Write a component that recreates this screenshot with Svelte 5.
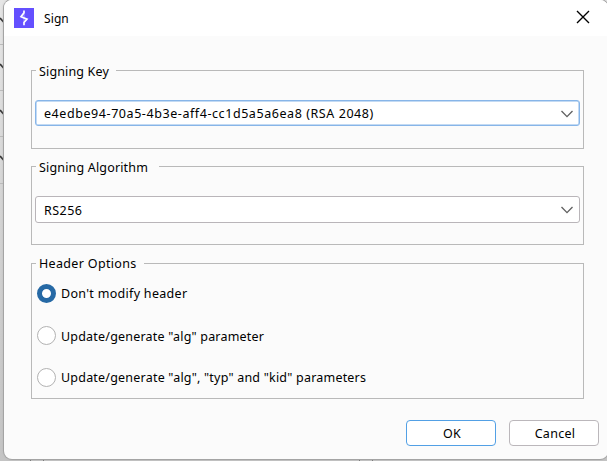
<script>
  const groups = [
    { title: 'Signing Key', gap: 80, spacing: 0.15, value: 'e4edbe94-70a5-4b3e-aff4-cc1d5a5a6ea8 (RSA 2048)', textSpacing: 0.57, focused: true },
    { title: 'Signing Algorithm', gap: 123, spacing: 0.17, value: 'RS256', textSpacing: 0.45, focused: false }
  ];
  const options = [
    { label: "Don't modify header", spacing: 0.3 },
    { label: 'Update/generate "alg" parameter', spacing: 0.2 },
    { label: 'Update/generate "alg", "typ" and "kid" parameters', spacing: 0.21 }
  ];
  let selected = $state(0);
</script>

<div class="desktop">
  <svg class="behind" width="607" height="461" viewBox="0 0 607 461">
    <path d="M0 44.5H4M0 90.5H4M0 136.5H4M0 183.5H4" stroke="#bbb" />
    <path d="M0 18L4 22.500M0 64L4 68.500M0 110L4 114.500M0 156L4 160.500" stroke="#333" stroke-width="1.800" />
    <path d="M30.500 459V461M43.500 459V461M359.500 459V461M372.500 459V461" stroke="#777" />
  </svg>
  <div class="dialog">
    <header>
      <svg class="logo" width="20" height="20" viewBox="0 0 20 20">
        <rect width="20" height="20" fill="#6450ff" />
        <path d="M10 2.500V4.800L7 8.700L13 11.100L10 14.500V17.200" fill="none" stroke="#fff" stroke-width="1.700" />
        <path d="M10 5V9.800M10 10V14.500" stroke="#fff" stroke-width="1.200" opacity=".35" />
      </svg>
      <span class="title">Sign</span>
      <svg class="close" width="14" height="14" viewBox="0 0 14 14">
        <path d="M1 1L13 13M13 1L1 13" stroke="#000" stroke-width="1.350" />
      </svg>
    </header>
    <main>
      {#each groups as g}
        <fieldset>
          <legend style:width="{g.gap}px" style:letter-spacing="{g.spacing}px">{g.title}</legend>
          <div class="combo" class:focused={g.focused}>
            <span style:letter-spacing="{g.textSpacing}px">{g.value}</span>
            <svg width="14" height="8" viewBox="0 0 14 8">
              <path d="M1.500 1L7 6.600L12.500 1" fill="none" stroke="#606060" stroke-width="1.350" />
            </svg>
          </div>
        </fieldset>
      {/each}
      <fieldset class="options">
        <legend style:width="108px" style:letter-spacing="0.33px">Header Options</legend>
        <div class="radios">
          {#each options as o, i}
            <label style:letter-spacing="{o.spacing}px">
              <input type="radio" name="header" value={i} bind:group={selected} />
              <span>{o.label}</span>
            </label>
          {/each}
        </div>
      </fieldset>
    </main>
    <footer>
      <button class="primary">OK</button>
      <button>Cancel</button>
    </footer>
  </div>
</div>

<style>
  .desktop {
    position: relative;
    box-sizing: border-box;
    width: 607px;
    height: 461px;
    padding-left: 4px;
    overflow: hidden;
    background: linear-gradient(#e6e6e6, #d4d4d4 45%, #c4c4c4);
    color: #000;
    font: 12.5px/18px 'Noto Sans', 'Open Sans', sans-serif;
  }
  .behind { position: absolute; left: 0; top: 0; }
  .dialog {
    position: relative;
    box-sizing: border-box;
    display: flex;
    flex-direction: column;
    width: 604px;
    height: 459px;
    border-radius: 8px;
    background: #fbfbfb;
    overflow: hidden;
    box-shadow: 0 0 0 1px #a4a4a4, 0 0 3px #aaa;
  }
  header {
    display: flex;
    align-items: center;
    height: 36px;
    padding: 0 18px 0 10px;
    box-sizing: border-box;
    background: #fff;
  }
  .title { margin-left: 10px; font-size: 12px; letter-spacing: 0.1px; padding-top: 1px; }
  .logo { display: block; }
  .close { margin-left: auto; margin-top: -2px; }
  main {
    display: flex;
    flex-direction: column;
    padding: 24px 23px 0 27px;
  }
  fieldset {
    box-sizing: border-box;
    min-width: 0;
    width: 553px;
    height: 89px;
    margin: 0 0 7px;
    padding: 0 3px;
    border: 1px solid #b9b9b9;
  }
  fieldset.options { height: 146px; margin: 1px 0 0; }
  legend {
    box-sizing: border-box;
    height: 21px;
    margin-left: 1px;
    padding: 3px 0 0 3px;
    white-space: nowrap;
  }
  .options legend { padding-top: 2px; }
  .combo {
    display: flex;
    align-items: center;
    justify-content: space-between;
    box-sizing: border-box;
    width: 545px;
    height: 27px;
    margin-top: 19px;
    padding: 1px 5px 0 8px;
    border: 1px solid #b9b5b9;
    border-radius: 3px;
    background: #fff;
    white-space: nowrap;
  }
  .combo.focused { height: 26px; padding-top: 0; border-color: #87b5e8; box-shadow: inset 0 0 0 0.500px #87b5e8; }
  .combo span { padding-top: 2px; }
  .combo svg { margin-top: -1px; }
  .focused svg { margin-top: 1px; }
  .radios { display: flex; flex-direction: column; padding: 10px 0 0 2px; }
  label { display: flex; align-items: center; height: 19px; margin-bottom: 23px; white-space: nowrap; }
  label:nth-child(2) { margin-bottom: 22.5px; }
  label span { padding-top: 1px; }
  label:first-child span { padding-top: 0; }
  label:nth-child(2) span { padding-top: 2px; }
  input {
    appearance: none;
    box-sizing: border-box;
    flex: none;
    width: 19px;
    height: 19px;
    margin: 0 5px 0 0;
    border: 1px solid #b2b2b2;
    border-radius: 50%;
    background: #fff;
  }
  input:checked { border: 5px solid #2669a5; }
  footer { display: flex; justify-content: flex-end; gap: 13px; margin-top: 21px; padding-right: 9px; }
  button {
    box-sizing: border-box;
    width: 90px;
    height: 26px;
    padding: 2px 0 0 2px;
    border: 1px solid #bbb7bb;
    border-radius: 4px;
    background: #fff;
    color: #000;
    font: inherit;
    letter-spacing: 0.3px;
  }
  button.primary { border-color: #52a0e5; }
</style>
